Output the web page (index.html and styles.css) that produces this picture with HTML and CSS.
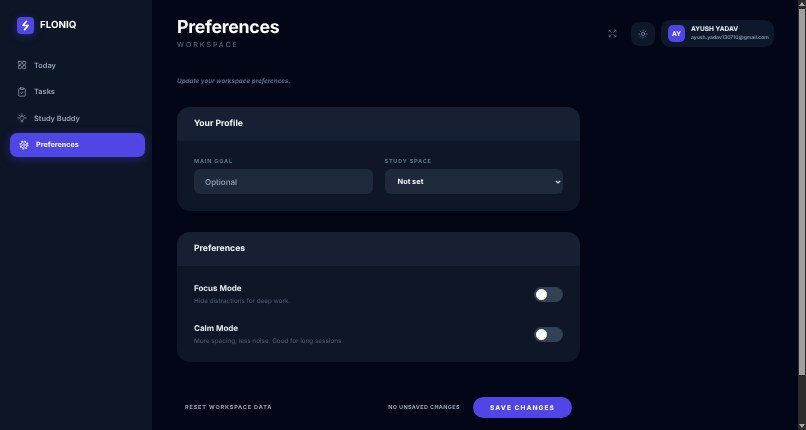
FILE: index.html
```html
<!DOCTYPE html>
<html lang="en">
<head>
    <meta charset="UTF-8">
    <meta name="viewport" content="width=device-width, initial-scale=1.0">
    <title>Floniq - Preferences</title>
    <link rel="stylesheet" href="styles.css">
</head>
<body>
    <aside class="sidebar">
        <div class="brand">
            <span class="brand-mark">
                <svg viewBox="0 0 24 24" width="11" height="11" fill="none" stroke="#fff" stroke-width="3.4" stroke-linejoin="round" stroke-linecap="round"><path d="M14 3 6 12h5M13 12h5l-8 9"/></svg>
            </span>
            <span class="brand-name">FLONIQ</span>
        </div>
        <nav class="nav">
            <a class="nav-item">
                <svg class="nav-icon" viewBox="0 0 24 24"><rect x="3" y="3" width="7.5" height="7.5" rx="2"/><rect x="13.5" y="3" width="7.5" height="7.5" rx="2"/><rect x="3" y="13.5" width="7.5" height="7.5" rx="2"/><rect x="13.5" y="13.5" width="7.5" height="7.5" rx="2"/></svg>
                Today
            </a>
            <a class="nav-item">
                <svg class="nav-icon" viewBox="0 0 24 24"><rect x="8" y="2" width="8" height="4" rx="1"/><path d="M16 4h2a2 2 0 0 1 2 2v14a2 2 0 0 1-2 2H6a2 2 0 0 1-2-2V6a2 2 0 0 1 2-2h2"/><path d="m9 14 2 2 4-4"/></svg>
                Tasks
            </a>
            <a class="nav-item">
                <svg class="nav-icon" viewBox="0 0 24 24"><path d="M12 7a5 5 0 0 0-3 9c.6.5 1 1.2 1 2h4c0-.8.4-1.5 1-2a5 5 0 0 0-3-9z"/><path d="M10 21h4"/><path d="M12 2v1.5M4.5 5l1 1M19.5 5l-1 1M2 12h2M20 12h2"/></svg>
                Study Buddy
            </a>
            <a class="nav-item active">
                <svg class="nav-icon" viewBox="0 0 24 24"><circle cx="12" cy="12" r="7.5"/><circle cx="12" cy="12" r="3"/><circle class="gear-teeth" cx="12" cy="12" r="9.5"/></svg>
                Preferences
            </a>
        </nav>
    </aside>

    <main class="main">
        <header class="topbar">
            <div class="titles">
                <h1>Preferences</h1>
                <div class="eyebrow">WORKSPACE</div>
            </div>
            <div class="top-actions">
                <svg class="expand-icon" viewBox="0 0 24 24"><path d="M3 8V4a1 1 0 0 1 1-1h4M3 3l6 6M21 8V4a1 1 0 0 0-1-1h-4M21 3l-6 6M3 16v4a1 1 0 0 0 1 1h4M3 21l6-6M21 16v4a1 1 0 0 1-1 1h-4M21 21l-6-6"/></svg>
                <button class="theme-btn">
                    <svg class="sun-icon" viewBox="0 0 24 24"><circle cx="12" cy="12" r="4"/><path d="M12 2v2M12 20v2M4.9 4.9l1.4 1.4M17.7 17.7l1.4 1.4M2 12h2M20 12h2M6.3 17.7l-1.4 1.4M19.1 4.9l-1.4 1.4"/></svg>
                </button>
                <div class="user-chip">
                    <span class="avatar">AY</span>
                    <div class="user-text">
                        <div class="user-name">AYUSH YADAV</div>
                        <div class="user-mail">ayush.yadav130710@gmail.com</div>
                    </div>
                </div>
            </div>
        </header>

        <div class="content">
            <p class="intro">Update your workspace preferences.</p>

            <section class="card">
                <h2 class="card-head">Your Profile</h2>
                <div class="card-body fields">
                    <div class="field">
                        <label for="goal">MAIN GOAL</label>
                        <input id="goal" type="text" placeholder="Optional">
                    </div>
                    <div class="field">
                        <label for="space">STUDY SPACE</label>
                        <select id="space"><option>Not set</option></select>
                    </div>
                </div>
            </section>

            <section class="card">
                <h2 class="card-head">Preferences</h2>
                <div class="card-body toggles">
                    <div class="toggle-row">
                        <div>
                            <div class="toggle-title">Focus Mode</div>
                            <div class="toggle-desc">Hide distractions for deep work.</div>
                        </div>
                        <span class="switch"><span class="knob"></span></span>
                    </div>
                    <div class="toggle-row">
                        <div>
                            <div class="toggle-title">Calm Mode</div>
                            <div class="toggle-desc">More spacing, less noise. Good for long sessions.</div>
                        </div>
                        <span class="switch"><span class="knob"></span></span>
                    </div>
                </div>
            </section>

            <div class="footer-bar">
                <a class="reset">RESET WORKSPACE DATA</a>
                <div class="save-group">
                    <span class="save-state">NO UNSAVED CHANGES</span>
                    <button class="save-btn">SAVE CHANGES</button>
                </div>
            </div>
        </div>
    </main>

    <div class="scrollbar">
        <span class="arrow-up"></span>
        <span class="thumb"></span>
        <span class="arrow-down"></span>
    </div>
</body>
</html>
```

FILE: styles.css
```css
body {
    margin: 0;
    display: flex;
    min-height: 100vh;
    background-color: #020617;
    font-family: Inter, "Liberation Sans", sans-serif;
    text-rendering: geometricPrecision;
    color: #f1f5f9;
}
.scrollbar {
    position: fixed;
    top: 0;
    right: 0;
    bottom: 0;
    width: 8px;
    box-sizing: border-box;
    padding: 2px 1px;
    background-color: #2c2c2c;
    display: flex;
    flex-direction: column;
    align-items: center;
    justify-content: space-between;
}
.thumb {
    width: 6px;
    height: 366px;
    margin-top: 3px;
    margin-bottom: auto;
    background-color: #9f9f9f;
}
.arrow-up {
    border-left: 3px solid transparent;
    border-right: 3px solid transparent;
    border-bottom: 4px solid #a8a8a8;
}
.arrow-down {
    border-left: 3px solid transparent;
    border-right: 3px solid transparent;
    border-top: 4px solid #a8a8a8;
}
.sidebar {
    width: 152px;
    flex-shrink: 0;
    box-sizing: border-box;
    padding: 16px 7px 0 10px;
    background-color: #0d1626;
    will-change: transform;
}
.brand {
    display: flex;
    align-items: center;
    gap: 6px;
    padding-left: 7px;
    height: 18px;
}
.brand-mark {
    width: 17px;
    height: 17px;
    border-radius: 4px;
    background-color: #4f46e5;
    box-shadow: 0 2px 8px rgba(79,70,229,0.35);
    display: flex;
    align-items: center;
    justify-content: center;
}
.brand-name {
    font-size: 9.8px;
    font-weight: 700;
    color: #fff;
}
.nav {
    margin-top: 19.5px;
    display: flex;
    flex-direction: column;
    gap: 3px;
}
.nav-item {
    height: 23.5px;
    display: flex;
    align-items: center;
    gap: 7px;
    padding-left: 7px;
    border-radius: 7px;
    font-size: 7.4px;
    font-weight: 600;
    color: #94a3b8;
}
.nav-icon {
    width: 10px;
    height: 10px;
    fill: none;
    stroke: currentColor;
    stroke-width: 1.8;
    stroke-linecap: round;
    stroke-linejoin: round;
}
.gear-teeth {
    stroke-width: 3;
    stroke-linecap: butt;
    stroke-dasharray: 3.5 3.96;
}
.active {
    padding-left: 9px;
    color: #f1f5f9;
    font-weight: 700;
    font-size: 7.2px;
    background-color: #4f46e5;
    box-shadow: 0 2px 10px rgba(79,70,229,0.35);
}
.main {
    flex: 1;
    min-width: 0;
    padding: 18px 32px 0 25px;
    will-change: transform;
}
.topbar {
    display: flex;
    justify-content: space-between;
}
h1 {
    margin: 0;
    font-size: 17.8px;
    line-height: 19px;
    font-weight: 700;
    letter-spacing: -0.3px;
    color: #fff;
}
.eyebrow {
    margin-top: 3px;
    font-size: 7px;
    line-height: 10px;
    letter-spacing: 2px;
    color: #64748b;
}
.top-actions {
    display: flex;
    align-items: center;
    gap: 6px;
    height: 27px;
    margin-top: 2px;
}
.expand-icon {
    width: 9px;
    height: 9px;
    fill: none;
    stroke: #64748b;
    stroke-width: 2;
    stroke-linecap: round;
    margin-right: 8px;
}
.theme-btn {
    width: 24px;
    height: 24px;
    padding: 0;
    border: none;
    border-radius: 8px;
    background-color: #0f172a;
    display: flex;
    align-items: center;
    justify-content: center;
}
.sun-icon {
    width: 10px;
    height: 10px;
    fill: none;
    stroke: #94a3b8;
    stroke-width: 1.6;
    stroke-linecap: round;
}
.user-chip {
    display: flex;
    align-items: center;
    gap: 6px;
    height: 27px;
    width: 113px;
    box-sizing: border-box;
    padding: 0 6px 0 7px;
    border-radius: 9px;
    background-color: #0f172a;
}
.avatar {
    width: 17px;
    height: 17px;
    flex-shrink: 0;
    border-radius: 5px;
    background-color: #4f46e5;
    display: flex;
    align-items: center;
    justify-content: center;
    font-size: 6.5px;
    font-weight: 700;
    color: #fff;
}
.user-name {
    font-size: 6.5px;
    line-height: 9px;
    font-weight: 700;
    color: #f1f5f9;
}
.user-mail {
    font-size: 5.1px;
    line-height: 8px;
    font-weight: 500;
    color: #94a3b8;
}
.content {
    width: 403px;
}
.intro {
    margin: 26px 0 0;
    font-size: 6.3px;
    line-height: 10px;
    font-style: italic;
    font-weight: 600;
    color: #64748b;
}
.card {
    margin-top: 21px;
    border-radius: 13px;
    background-color: #0e1627;
    overflow: hidden;
}
.card-head {
    margin: 0;
    padding: 0 17px;
    height: 34px;
    line-height: 35px;
    font-size: 8.6px;
    font-weight: 700;
    color: #f1f5f9;
    background-color: #162032;
}
.card-body {
    padding: 16px 17px 17px;
}
.fields {
    display: grid;
    grid-template-columns: 1fr 1fr;
    gap: 12px;
}
label {
    display: block;
    margin-bottom: 4px;
    font-size: 5.5px;
    line-height: 10px;
    font-weight: 700;
    letter-spacing: 0.8px;
    color: #64748b;
}
input, select {
    display: block;
    width: 100%;
    box-sizing: border-box;
    height: 25px;
    margin-top: -2px;
    border: none;
    border-radius: 6px;
    background-color: #1e293b;
    font-family: Inter, "Liberation Sans", sans-serif;
    text-rendering: geometricPrecision;
    font-size: 8px;
    font-weight: 500;
    outline: none;
}
input {
    padding: 0 11px;
    color: #f1f5f9;
}
input::placeholder {
    color: #94a3b8;
}
select {
    appearance: none;
    padding: 0 13px;
    font-size: 7.4px;
    font-weight: 700;
    color: #f1f5f9;
    background-image: url("data:image/svg+xml,%3Csvg xmlns='http://www.w3.org/2000/svg' width='6' height='4'%3E%3Cpath d='M.8.8 3 3l2.2-2.2' fill='none' stroke='%23e2e8f0' stroke-width='1.2'/%3E%3C/svg%3E");
    background-repeat: no-repeat;
    background-position: right 2px center;
}
.toggles {
    padding-top: 14.5px;
    padding-bottom: 14.5px;
    display: flex;
    flex-direction: column;
    gap: 13px;
}
.toggle-row {
    display: flex;
    align-items: center;
    justify-content: space-between;
    height: 27px;
}
.toggle-title {
    font-size: 8px;
    line-height: 12px;
    font-weight: 700;
    color: #e2e8f0;
}
.toggle-desc {
    margin-top: 1.5px;
    font-size: 6.3px;
    line-height: 10px;
    font-weight: 500;
    color: #475569;
}
.switch {
    width: 29px;
    height: 15px;
    border-radius: 8px;
    background-color: #334155;
    display: flex;
    align-items: center;
    padding-left: 2px;
    box-sizing: border-box;
}
.knob {
    width: 11px;
    height: 11px;
    border-radius: 50%;
    background-color: #fff;
}
.footer-bar {
    margin-top: 35px;
    padding: 0 8px;
    display: flex;
    align-items: center;
    justify-content: space-between;
}
.reset {
    font-size: 5.5px;
    font-weight: 700;
    letter-spacing: 0.85px;
    color: #94a3b8;
}
.save-group {
    display: flex;
    align-items: center;
    gap: 13px;
}
.save-state {
    font-size: 5.5px;
    font-weight: 700;
    letter-spacing: 0.35px;
    color: #94a3b8;
}
.save-btn {
    width: 99px;
    height: 21px;
    padding: 0;
    border: none;
    border-radius: 11px;
    background-color: #4f46e5;
    font-family: Inter, "Liberation Sans", sans-serif;
    text-rendering: geometricPrecision;
    font-size: 6.5px;
    font-weight: 800;
    letter-spacing: 1.1px;
    color: #f1f5f9;
}
```
